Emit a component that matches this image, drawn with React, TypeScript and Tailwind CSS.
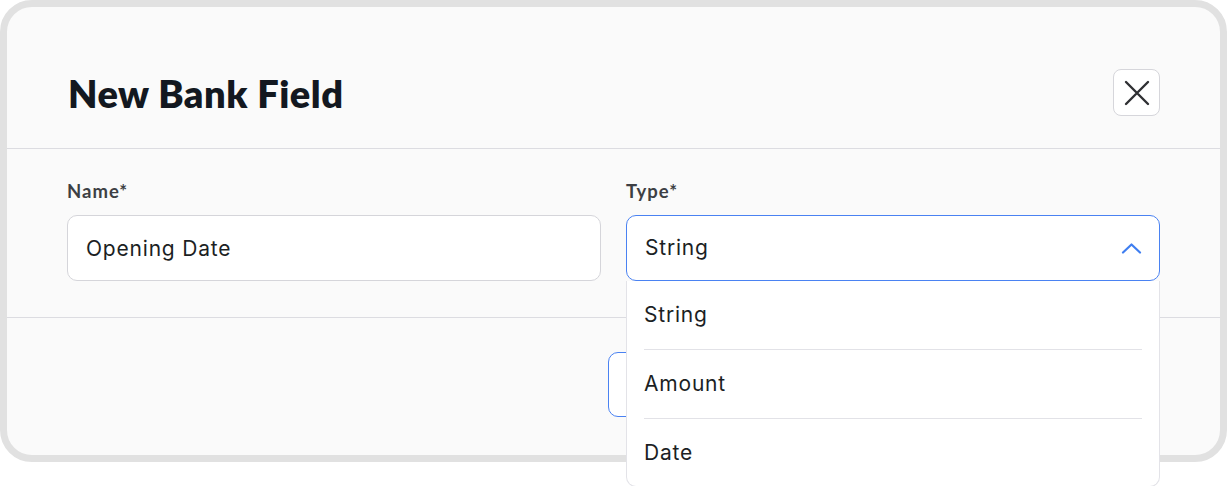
import { useState } from "react";

const TYPES = ["String", "Amount", "Date"];

function CloseIcon() {
  return (
    <svg viewBox="0 0 26 26" className="h-[26px] w-[26px]" fill="none" stroke="#2f3033" strokeWidth="2.4" strokeLinecap="round">
      <path d="M2 2 L24 24 M24 2 L2 24" />
    </svg>
  );
}

function ChevronUp() {
  return (
    <svg viewBox="0 0 21 11" className="h-[11px] w-[21px]" fill="none" stroke="#3f7ef0" strokeWidth="2.2" strokeLinecap="round" strokeLinejoin="round">
      <path d="M2 9.5 L10.5 1.5 L19 9.5" />
    </svg>
  );
}

export default function App() {
  const [name, setName] = useState("Opening Date");
  const [type, setType] = useState("String");

  return (
    <div className="h-[486px] w-[1227px] bg-white font-['Inter',sans-serif] text-[#1c1f24]">
      <div className="flex h-[462px] w-[1227px] flex-col rounded-[32px] border-[7px] border-[#e1e1e1] bg-[#fafafa]">
        {/* header */}
        <div className="flex items-center justify-between border-b border-[#dcdce1] pb-[32px] pl-[61px] pr-[60px] pt-[62px]">
          <h1 className="font-['Lato',sans-serif] text-[38px] font-extrabold leading-none tracking-[0.5px] text-[#131820]">
            New Bank Field
          </h1>
          <button aria-label="Close" className="flex h-[47px] w-[47px] items-center justify-center rounded-[8px] border border-[#d6d6db] bg-white">
            <CloseIcon />
          </button>
        </div>

        {/* fields */}
        <div className="grid grid-cols-2 gap-x-[25px] border-b border-[#dcdce1] pb-[36px] pl-[60px] pr-[60px] pt-[30px]">
          <div>
            <label className="mb-[12px] block font-['Lato',sans-serif] text-[18.5px] font-bold leading-[24px] tracking-[1px] text-[#3d3f44]">Name*</label>
            <input
              value={name}
              onChange={(e) => setName(e.target.value)}
              className="h-[66px] w-full rounded-[10px] border border-[#d5d5da] bg-white px-[18px] text-[21px] tracking-[0.8px] text-[#1c1f24] outline-none"
            />
          </div>
          <div>
            <label className="mb-[12px] block font-['Lato',sans-serif] text-[18.5px] font-bold leading-[24px] tracking-[1px] text-[#3d3f44]">Type*</label>
            <div className="relative">
              <div className="flex h-[66px] w-full items-center justify-between rounded-[10px] border border-[#4a82f2] bg-white pl-[18px] pr-[17px] text-[21px] tracking-[0.8px]">
                <span>{type}</span>
                <ChevronUp />
              </div>
              <ul className="absolute left-0 right-0 top-full z-10 rounded-b-[10px] border border-t-0 border-[#e3e3e8] bg-white px-[17px]">
                {TYPES.map((t, i) => (
                  <li
                    key={t}
                    onClick={() => setType(t)}
                    className={`flex items-center text-[21px] tracking-[0.8px] ${i < TYPES.length - 1 ? "h-[69px] border-b border-[#e2e2e7]" : "h-[67px]"}`}
                  >
                    {t}
                  </li>
                ))}
              </ul>
            </div>
          </div>
        </div>

        {/* actions, mostly covered by the open type menu */}
        <div className="flex justify-end gap-[23px] pl-[60px] pr-[61px] pt-[34px]">
          <button aria-label="Cancel" className="h-[65px] w-[264px] rounded-[10px] border border-[#4a82f2] bg-white" />
          <button aria-label="Create" className="h-[65px] w-[264px] rounded-[10px] bg-[#3f7ef0]" />
        </div>
      </div>
    </div>
  );
}
